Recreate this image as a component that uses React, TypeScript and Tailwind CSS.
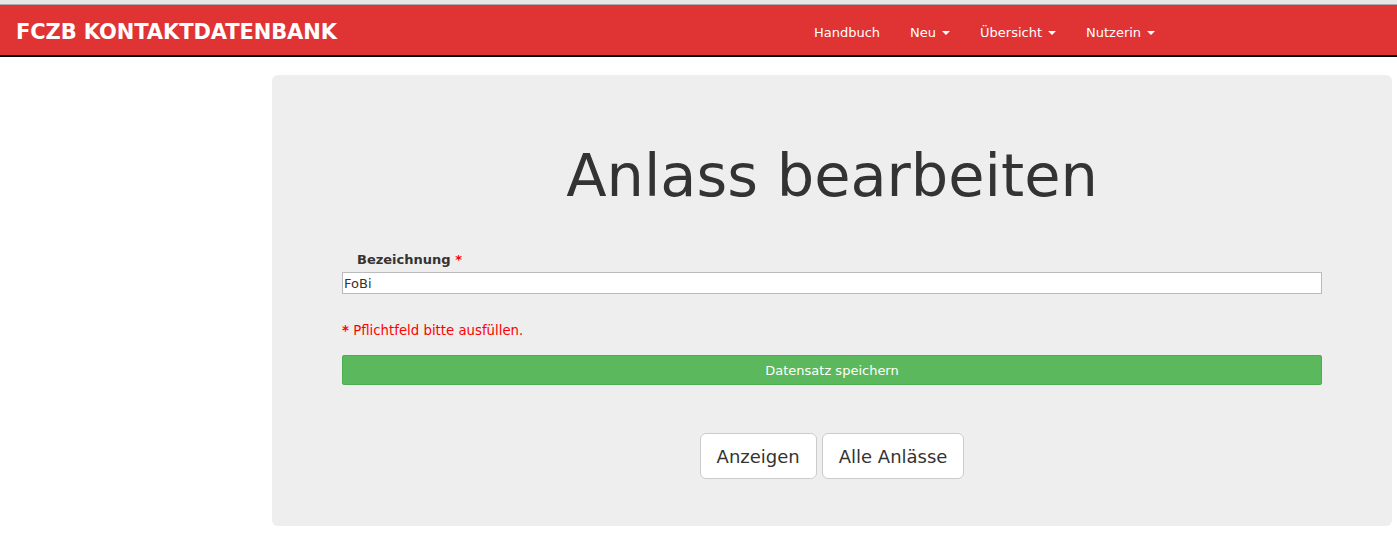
import React from "react";

const Caret = () => (
  <span className="ml-[6px] inline-block h-0 w-0 border-x-[4px] border-t-[4px] border-x-transparent border-t-white align-middle" />
);

export default function App() {
  return (
    <div className="min-h-[533px] bg-white" style={{ fontFamily: '"DejaVu Sans", Verdana, sans-serif' }}>
      <div className="h-[5px] border-b border-[#aaa] bg-[#e6e6e6]" />
      <nav className="flex h-[52px] items-center border-b-2 border-black bg-[#e03334] pt-[5px]">
        <div className="pl-[16px] text-[21px] font-bold text-white tracking-[-0.1px]">FCZB KONTAKTDATENBANK</div>
        <ul className="ml-[462px] flex text-[13px] text-white">
          <li className="px-[15px]">Handbuch</li>
          <li className="px-[15px]">Neu<Caret /></li>
          <li className="px-[15px]">Übersicht<Caret /></li>
          <li className="px-[15px]">Nutzerin<Caret /></li>
        </ul>
      </nav>
      <div className="flex pt-[18px]">
        <div className="ml-[272px] w-[1120px] rounded-[6px] bg-[#eeeeee] px-[70px] pb-[47px] pt-[69px]">
          <h1 className="text-center text-[59px] leading-[1.1] text-[#333]">Anlass bearbeiten</h1>
          <div className="mt-[41px]">
            <label className="block pl-[15px] text-[13px] font-bold text-[#333]">
              Bezeichnung <span className="text-[#ff0000]">*</span>
            </label>
            <input
              readOnly
              value="FoBi"
              className="mt-[3px] block h-[22px] w-full border border-[#bbb] bg-white px-[1px] text-[13px] text-[#333] outline-none"
            />
            <p className="mt-[27px] text-[13.3px] text-[#ff0000]"><span className="font-bold">*</span> Pflichtfeld bitte ausfüllen.</p>
            <button className="mt-[14px] block h-[30px] w-full rounded-[2px] border border-[#4cae4c] bg-[#5cb85c] text-[13px] text-white">
              Datensatz speichern
            </button>
          </div>
          <div className="mt-[48px] flex justify-center gap-[5px]">
            <button className="h-[46px] rounded-[6px] border border-[#ccc] bg-white px-[16px] text-[18px] text-[#333]">Anzeigen</button>
            <button className="h-[46px] rounded-[6px] border border-[#ccc] bg-white px-[16px] text-[18px] text-[#333]">Alle Anlässe</button>
          </div>
        </div>
      </div>
    </div>
  );
}
